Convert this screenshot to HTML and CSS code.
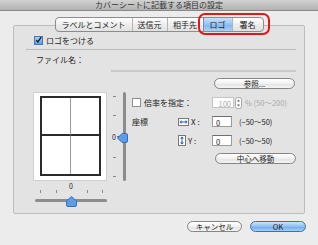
FILE: index.html
```html
<!DOCTYPE html>
<html lang="ja">
<head>
  <meta charset="UTF-8" />
  <title>カバーシートに記載する項目の設定</title>
  <link rel="stylesheet" href="styles.css">
</head>
<body>
  <div class="titlebar">カバーシートに記載する項目の設定</div>

  <div class="group">
    <div class="tabs">
      <span class="tab tab-label">ラベルとコメント</span>
      <span class="tab tab-from">送信元</span>
      <span class="tab tab-to">相手先</span>
      <span class="tab tab-logo selected">ロゴ</span>
      <span class="tab tab-sign">署名</span>
    </div>

    <div class="check-row">
      <span class="checkbox checked">
        <svg width="8" height="8" viewBox="0 0 8 8"><path d="M1.5 4.2 L3.3 6.3 L7 0.8" fill="none" stroke="#111" stroke-width="1.4"/></svg>
      </span>
      ロゴをつける
    </div>
    <div class="separator"></div>
    <div class="label-row">ファイル名：</div>
    <div class="path-line"></div>
    <div class="browse-row"><span class="button browse">参照...</span></div>

    <div class="editor">
      <div class="preview-col">
        <div class="preview">
          <div class="page">
            <div class="cell tl"></div>
            <div class="cell tr"></div>
            <div class="cell bl"></div>
            <div class="cell br"></div>
          </div>
        </div>
        <div class="hslider">
          <div class="hlabel">0</div>
          <div class="hticks">
            <i></i><i></i><i class="hidden"></i><i></i><i></i>
          </div>
          <div class="htrack"></div>
          <svg class="thumb hthumb" width="11" height="11" viewBox="0 0 11 11">
            <path d="M5.5 0.5 L10.5 5 L10.5 9 Q10.5 10.5 9 10.5 L2 10.5 Q0.5 10.5 0.5 9 L0.5 5 Z" fill="#5b9de8" stroke="#3a6fb5"/>
          </svg>
        </div>
      </div>

      <div class="vslider">
        <div class="vticks">
          <i></i><i></i>
          <span class="vzero">0<b></b></span>
          <i></i><i></i>
        </div>
        <div class="vtrack"></div>
        <svg class="thumb vthumb" width="11" height="10" viewBox="0 0 11 10">
          <path d="M0.5 5 L5 0.5 L9 0.5 Q10.5 0.5 10.5 2 L10.5 8 Q10.5 9.5 9 9.5 L5 9.5 Z" fill="#5b9de8" stroke="#3a6fb5"/>
        </svg>
      </div>

      <div class="settings">
        <div class="row scale-row">
          <span class="wide-cell"><span class="checkbox"></span>倍率を指定：</span>
          <span class="field disabled">100</span>
          <span class="stepper">
            <svg width="7" height="12" viewBox="0 0 7 12">
              <rect x="0.5" y="0.5" width="6" height="11" rx="2" fill="#fbfbfb" stroke="#a5a5a5"/>
              <path d="M2 4.5 L3.5 2.5 L5 4.5 Z M2 7.5 L3.5 9.5 L5 7.5 Z" fill="#666"/>
            </svg>
          </span>
          <span class="hint disabled-text">% (50〜200)</span>
        </div>
        <div class="row">
          <span class="name-cell">座標</span>
          <span class="axis-cell">
            <svg width="11" height="8" viewBox="0 0 11 8">
              <rect x="0.5" y="0.5" width="10" height="7" fill="#fff" stroke="#777"/>
              <path d="M2 4 H9" stroke="#2a5fb0" stroke-width="1"/>
              <path d="M1.5 4 L3.5 2 L3.5 6 Z M9.5 4 L7.5 2 L7.5 6 Z" fill="#2a5fb0"/>
            </svg>
            X :
          </span>
          <span class="field">0</span>
          <span class="hint">(−50〜50)</span>
        </div>
        <div class="row">
          <span class="name-cell"></span>
          <span class="axis-cell">
            <svg width="8" height="11" viewBox="0 0 8 11">
              <rect x="0.5" y="0.5" width="7" height="10" fill="#fff" stroke="#777"/>
              <path d="M4 2 V9" stroke="#2a5fb0" stroke-width="1"/>
              <path d="M4 1.5 L2 3.5 L6 3.5 Z M4 9.5 L2 7.5 L6 7.5 Z" fill="#2a5fb0"/>
            </svg>
            Y :
          </span>
          <span class="field">0</span>
          <span class="hint">(−50〜50)</span>
        </div>
        <div class="center-row"><span class="button center">中心へ移動</span></div>
      </div>
    </div>
  </div>

  <div class="footer">
    <span class="button cancel">キャンセル</span>
    <span class="button default">OK</span>
  </div>

  <div class="highlight"></div>
</body>
</html>
```

FILE: styles.css
```css
body {
  margin: 0;
  width: 318px;
  height: 245px;
  overflow: hidden;
  background: #ececec;
  font-family: "Noto Sans CJK JP", "Noto Sans", sans-serif;
  font-size: 8px;
  color: #222;
  position: relative;
}
.titlebar {
  height: 10px;
  line-height: 10px;
  text-align: center;
  font-size: 8px;
  color: #333;
  background: linear-gradient(#d2d2d2, #b2b2b2);
  border-bottom: 1px solid #8a8a8a;
}
.group {
  margin: 14px 13px 0;
  height: 187px;
  border: 1px solid #bcbcbc;
  border-radius: 2px;
  background: #e3e3e3;
  display: flex;
  flex-direction: column;
}
.tabs {
  align-self: center;
  display: flex;
  height: 13px;
  margin-top: -9px;
  border: 1px solid #8c8c8c;
  border-radius: 4px;
  background: linear-gradient(#ffffff, #ececec 55%, #e2e2e2);
  overflow: hidden;
}
.tab {
  height: 13px;
  line-height: 13px;
  text-align: center;
  border-left: 1px solid #b4b4b4;
  white-space: nowrap;
  overflow: hidden;
}
.tab:first-child {
  border-left: none;
}
.tab-label { width: 76px; }
.tab-from { width: 34px; }
.tab-to { width: 35px; }
.tab-logo { width: 28px; }
.tab-sign { width: 30px; }
.tab.selected {
  background: linear-gradient(#c8e1fb, #95c3f2 50%, #7fb5ef 51%, #a7d0f7);
  border-left-color: #6b8fbf;
}
.check-row {
  display: flex;
  align-items: center;
  height: 10px;
  margin: 3px 0 0 20px;
  gap: 3px;
}
.checkbox {
  display: inline-flex;
  align-items: center;
  justify-content: center;
  width: 7px;
  height: 7px;
  border: 1px solid #8e8e8e;
  background: #fff;
  flex: none;
}
.checkbox.checked {
  background: linear-gradient(#a9cdf5, #5f9de6);
  border-color: #4a78b5;
}
.separator {
  margin: 4px 8px 0 12px;
  height: 1px;
  background: #bcbcbc;
}
.label-row {
  height: 10px;
  line-height: 10px;
  margin: 5px 0 0 22px;
}
.path-line {
  margin: 5px 8px 0 97px;
  height: 2px;
  background: #c9c9c9;
}
.browse-row {
  display: flex;
  justify-content: flex-end;
  margin: 6px 9px 0 0;
}
.button {
  display: inline-flex;
  align-items: center;
  justify-content: center;
  height: 9px;
  border: 1px solid #858585;
  border-radius: 6px;
  background: linear-gradient(#ffffff, #f1f1f1 50%, #e2e2e2 51%, #f4f4f4);
  font-size: 7.5px;
  color: #222;
}
.browse, .center {
  width: 79px;
}
.editor {
  display: flex;
  margin-top: 3px;
}
.preview-col {
  margin-left: 19px;
  width: 74px;
}
.preview {
  width: 74px;
  height: 89px;
  box-sizing: border-box;
  border: 1px solid #cfcfcf;
  background: #fff;
  padding: 3px 0 0 6px;
}
.page {
  width: 61px;
  height: 80px;
  box-sizing: border-box;
  border: 2px solid #2b2b2b;
  display: grid;
  grid-template-columns: 1fr 1fr;
  grid-template-rows: 1fr 1fr;
}
.cell.tl, .cell.bl {
  border-right: 1px solid #9a9a9a;
}
.cell.tl, .cell.tr {
  border-bottom: 2px solid #2b2b2b;
}
.hslider {
  position: relative;
  margin-left: 2px;
  width: 72px;
}
.hlabel {
  height: 6px;
  line-height: 6px;
  margin-top: 2px;
  text-align: center;
  font-size: 7px;
}
.hticks {
  display: flex;
  justify-content: space-between;
  margin: 1px 4px 0 5px;
  height: 3px;
}
.hticks i, .vticks i {
  display: block;
  background: #8a8a8a;
}
.hticks i {
  width: 1px;
  height: 3px;
}
.hticks i.hidden {
  visibility: hidden;
}
.htrack {
  margin-top: 6px;
  height: 3px;
  border-radius: 2px;
  background: #8c8c8c;
}
.thumb {
  position: absolute;
  display: block;
}
.hthumb {
  left: 31px;
  top: 13px;
}
.vslider {
  position: relative;
  display: flex;
  width: 24px;
  height: 89px;
}
.vticks {
  width: 16px;
  display: flex;
  flex-direction: column;
  justify-content: space-between;
  align-items: flex-end;
  padding: 4px 7px 4px 0;
  box-sizing: border-box;
}
.vticks i {
  width: 3px;
  height: 1px;
}
.vzero {
  display: flex;
  align-items: center;
  font-size: 7px;
  line-height: 6px;
  margin-right: -7px;
}
.vzero b {
  display: block;
  width: 6px;
  height: 1px;
  margin-left: 1px;
  background: #666;
}
.vtrack {
  width: 3px;
  border-radius: 2px;
  background: #8c8c8c;
}
.vthumb {
  left: 10px;
  top: 41px;
}
.settings {
  width: 165px;
  padding-top: 5px;
}
.row {
  display: flex;
  align-items: center;
  height: 11px;
  margin-bottom: 8px;
}
.wide-cell {
  width: 80px;
  display: flex;
  align-items: center;
  gap: 3px;
  padding-left: 1px;
}
.name-cell {
  width: 47px;
  padding-left: 1px;
  box-sizing: border-box;
}
.axis-cell {
  width: 34px;
  display: flex;
  align-items: center;
  gap: 2px;
}
.field {
  width: 20px;
  height: 11px;
  line-height: 11px;
  box-sizing: border-box;
  border: 1px solid #9a9a9a;
  border-top-color: #6f6f6f;
  background: #fff;
  padding-left: 3px;
  font-size: 7.5px;
}
.field.disabled {
  width: 22px;
  color: #a8a8a8;
  border-color: #c4c4c4;
  text-align: right;
  padding: 0 2px 0 0;
}
.stepper {
  display: flex;
  margin-left: 1px;
}
.hint {
  margin-left: 7px;
  font-size: 7.5px;
}
.disabled-text {
  margin-left: 3px;
  color: #a8a8a8;
}
.center-row {
  display: flex;
  justify-content: flex-end;
  margin: -1px 0 0;
}
.footer {
  display: flex;
  justify-content: flex-end;
  gap: 8px;
  margin: 7px 12px 0 0;
}
.cancel {
  width: 53px;
}
.default {
  width: 54px;
  border-color: #3f6fae;
  background: linear-gradient(#cfe5fb, #8dbff1 50%, #69a9ec 51%, #a5d2f8);
}
.highlight {
  position: absolute;
  left: 198px;
  top: 13px;
  width: 68px;
  height: 18px;
  border: 2px solid #e01818;
  border-radius: 7px;
}
```
